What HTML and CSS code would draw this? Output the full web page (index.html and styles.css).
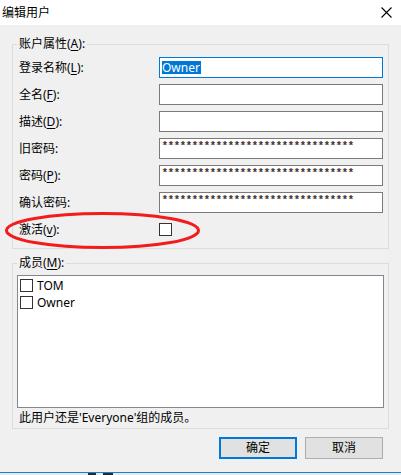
FILE: index.html
```html
<!DOCTYPE html>
<html lang="zh-CN">
<head>
<meta charset="utf-8">
<title>编辑用户</title>
<link rel="stylesheet" href="styles.css">
</head>
<body>
<div class="window">
  <div class="titlebar">
    <span class="title">编辑用户</span>
    <svg class="close" width="11" height="11" viewBox="0 0 11 11"><path d="M0.5 0.5 L10.5 10.5 M10.5 0.5 L0.5 10.5" stroke="#000" stroke-width="1.1" fill="none"/></svg>
  </div>
  <div class="content">
    <div class="group g1">
      <span class="legend">账户属性(<u>A</u>):</span>
      <div class="form">
        <span class="label">登录名称(<u>L</u>):</span>
        <div class="field focus"><span class="sel">Owner</span></div>
        <span class="label">全名(<u>F</u>):</span>
        <div class="field"></div>
        <span class="label">描述(<u>D</u>):</span>
        <div class="field"></div>
        <span class="label">旧密码:</span>
        <div class="field pw"><span class="stars">********************************</span></div>
        <span class="label">密码(<u>P</u>):</span>
        <div class="field pw"><span class="stars">********************************</span></div>
        <span class="label">确认密码:</span>
        <div class="field pw"><span class="stars">********************************</span></div>
        <span class="label">激活(<u>v</u>):</span>
        <div class="checkcell"><span class="check"></span></div>
      </div>
    </div>
    <div class="group g2">
      <span class="legend">成员(<u>M</u>):</span>
      <div class="listbox">
        <div class="item"><span class="check"></span><span>TOM</span></div>
        <div class="item"><span class="check"></span><span>Owner</span></div>
      </div>
      <div class="note">此用户还是'Everyone'组的成员。</div>
    </div>
    <div class="buttons">
      <button class="btn default">确定</button>
      <button class="btn">取消</button>
    </div>
  </div>
  <div class="taskbar"><span class="mark m1"></span><span class="mark m2"></span></div>
  <svg class="annot" width="401" height="475" viewBox="0 0 401 475"><ellipse cx="102.5" cy="230.5" rx="96" ry="17" fill="none" stroke="#f21c1c" stroke-width="3"/></svg>
</div>
</body>
</html>
```
FILE: styles.css
```css
* { box-sizing: border-box; }
html, body { margin: 0; padding: 0; }
body {
  font-family: "Noto Sans", "Noto Sans CJK SC", sans-serif;
  font-size: 12px;
  line-height: 16px;
  color: #000;
  background: #f0f0f0;
}
.window {
  position: relative;
  width: 401px;
  height: 475px;
  background: #f0f0f0;
  overflow: hidden;
  display: flex;
  flex-direction: column;
}
.titlebar {
  height: 25px;
  background: #fff;
  display: flex;
  align-items: center;
  justify-content: space-between;
  padding: 0 9px 0 2px;
}
.title { font-size: 12px; }
.close { display: block; }
.content {
  flex: 1;
  display: flex;
  flex-direction: column;
}
.group {
  position: relative;
  border: 1px solid #dcdcdc;
  margin: 0 12px;
}
.legend {
  position: absolute;
  top: -9px;
  left: 4px;
  padding: 0 2px;
  background: #f0f0f0;
  line-height: 16px;
  white-space: nowrap;
}
u { text-decoration: underline; text-underline-offset: 2px; }
.g1 {
  margin-top: 19px;
  padding: 12px 5px 8px 6px;
}
.form {
  display: grid;
  grid-template-columns: 140px 224px;
  grid-auto-rows: 21px;
  row-gap: 6px;
  align-items: center;
}
.label { white-space: nowrap; }
.field {
  height: 21px;
  border: 1px solid #7a7a7a;
  background: #fff;
  display: flex;
  align-items: center;
  padding-left: 2px;
}
.field.focus { border-color: #0078d7; }
.sel {
  background: #0078d7;
  color: #fff;
  line-height: 13px;
  padding: 0 1px 0 0;
}
.stars {
  font-family: "Liberation Mono", monospace;
  font-size: 10px;
  line-height: 10px;
  font-weight: bold;
  color: #2f3340;
  text-shadow: -1px 0 rgba(214, 150, 60, 0.45);
  margin-bottom: 3px;
  white-space: nowrap;
}
.checkcell { display: flex; align-items: center; }
.check {
  display: inline-block;
  width: 13px;
  height: 13px;
  border: 1px solid #333;
  background: #fff;
  flex: none;
}
.g2 {
  margin-top: 14px;
  padding: 11px 4px 0 4px;
}
.listbox {
  height: 133px;
  border: 1px solid #828790;
  background: #fff;
  padding: 1px 0 0 2px;
}
.item {
  display: flex;
  align-items: center;
  gap: 4px;
  height: 17px;
}
.note {
  height: 20px;
  line-height: 20px;
  padding-left: 2px;
}
.buttons {
  display: flex;
  justify-content: flex-end;
  gap: 8px;
  margin-top: 8px;
  padding-right: 18px;
}
.btn {
  width: 78px;
  height: 22px;
  border: 1px solid #adadad;
  background: #e1e1e1;
  font-family: "Noto Sans", "Noto Sans CJK SC", sans-serif;
  font-size: 12px;
  line-height: 16px;
  color: #000;
  padding: 0;
  margin: 0;
}
.btn.default { border: 2px solid #0078d7; }
.taskbar {
  height: 3px;
  border-top: 1px solid #1a7fd6;
  background: #e9e9e9;
  display: flex;
  flex: none;
}
.mark { display: block; height: 2px; background: #2a2a2a; }
.m1 { margin-left: 88px; width: 8px; }
.m2 { margin-left: 7px; width: 10px; }
.annot {
  position: absolute;
  left: 0;
  top: 0;
  pointer-events: none;
}
```
